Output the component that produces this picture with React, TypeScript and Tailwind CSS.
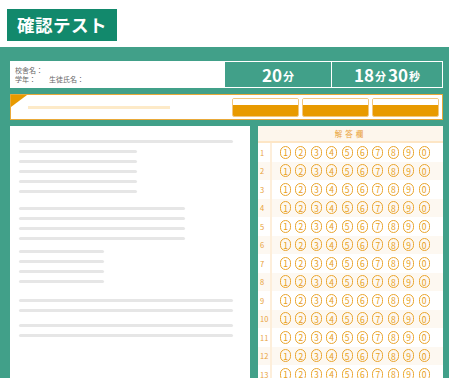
import React from "react";

const font = { fontFamily: '"Noto Sans CJK JP", "Noto Sans", sans-serif' };

const lines: { w: number; mt: number }[] = [
  { w: 214, mt: 0 },
  { w: 118, mt: 7 },
  { w: 118, mt: 7 },
  { w: 118, mt: 7 },
  { w: 118, mt: 7 },
  { w: 118, mt: 7 },
  { w: 166, mt: 14 },
  { w: 166, mt: 7 },
  { w: 166, mt: 7 },
  { w: 166, mt: 7 },
  { w: 85, mt: 10 },
  { w: 85, mt: 7 },
  { w: 85, mt: 7 },
  { w: 85, mt: 7 },
  { w: 214, mt: 16 },
  { w: 214, mt: 7 },
  { w: 214, mt: 12 },
  { w: 214, mt: 7 },
];

const digits = ["1", "2", "3", "4", "5", "6", "7", "8", "9", "0"];

export default function App() {
  return (
    <div className="w-[449px] h-[378px] overflow-hidden bg-white flex flex-col" style={font}>
      <div className="h-[47px] shrink-0 pl-[7px] pt-[9px]">
        <div className="w-[110px] h-[32px] bg-[#12896c] text-white font-bold text-[17.5px] leading-[32px] text-center tracking-[0.5px]">
          確認テスト
        </div>
      </div>
      <div className="flex-1 bg-[#41a089] pl-[10px] pr-[6px] pt-[14px] flex flex-col gap-[6px] min-h-0">
        <div className="flex h-[27px] shrink-0">
          <div className="w-[214px] bg-white pl-[5px] pt-[5px] text-[7px] leading-[9px] text-[#666]">
            <div>校舎名：</div>
            <div className="flex">
              <span className="w-[34px]">学年：</span>
              <span>生徒氏名：</span>
            </div>
          </div>
          <div className="w-[108px] border border-white flex items-center justify-center text-white font-bold">
            <span className="text-[17px]">20</span>
            <span className="text-[11px] ml-[1px] mt-[3px]">分</span>
          </div>
          <div className="w-[111px] border border-l-0 border-white flex items-center justify-center text-white font-bold">
            <span className="text-[17px]">18</span>
            <span className="text-[11px] ml-[1px] mt-[3px]">分</span>
            <span className="text-[17px] ml-[2px]">30</span>
            <span className="text-[11px] ml-[1px] mt-[3px]">秒</span>
          </div>
        </div>
        <div className="relative h-[26px] shrink-0 bg-white border-[1.5px] border-[#e9a93a] flex items-center">
          <div
            className="absolute left-0 top-0 w-[16px] h-[12px] bg-[#e89a00]"
            style={{ clipPath: "polygon(0 0, 100% 0, 0 100%)" }}
          />
          <div className="ml-[17px] w-[142px] h-[3px] bg-[#fdeac8]" />
          <div className="ml-auto mr-[3px] flex gap-[3px]">
            {[0, 1, 2].map((i) => (
              <div
                key={i}
                className="w-[67px] h-[19px] rounded-[2px] border border-[#f3c77e] overflow-hidden flex flex-col"
              >
                <div className="h-[6px] bg-white" />
                <div className="flex-1 bg-[#e89a00]" />
              </div>
            ))}
          </div>
        </div>
        <div className="flex gap-[8px] flex-1 min-h-0">
          <div className="w-[240px] bg-white pl-[9px] pt-[13.5px]">
            {lines.map((l, i) => (
              <div
                key={i}
                className="h-[3px] rounded-full bg-[#e6e6e6]"
                style={{ width: l.w, marginTop: l.mt }}
              />
            ))}
          </div>
          <div className="w-[185px] bg-white flex flex-col">
            <div className="h-[15px] shrink-0 bg-[#fdf6ec] flex items-center justify-center text-[7.5px] text-[#e9a23a] tracking-[3px]">
              解答欄
            </div>
            <div className="h-[2px] shrink-0 bg-[#fde6c6]" />
            {Array.from({ length: 13 }).map((_, r) => (
              <div
                key={r}
                className={`h-[18.5px] shrink-0 flex items-center ${r % 2 === 1 ? "bg-[#fdf8f1]" : "bg-white"}`}
              >
                <div className="w-[12px] pl-[2px] text-[7.5px] text-[#e9a23a] leading-none">{r + 1}</div>
                <div className="w-[2px] h-full bg-[#fdeeda]" />
                <div className="flex pl-[8px] gap-[4.4px]">
                  {digits.map((d) => (
                    <div
                      key={d}
                      className="w-[11px] h-[13px] rounded-full border border-[#eaa52e] flex items-center justify-center text-[8.5px] text-[#e8a020] leading-none"
                    >
                      {d}
                    </div>
                  ))}
                </div>
              </div>
            ))}
          </div>
        </div>
      </div>
    </div>
  );
}
